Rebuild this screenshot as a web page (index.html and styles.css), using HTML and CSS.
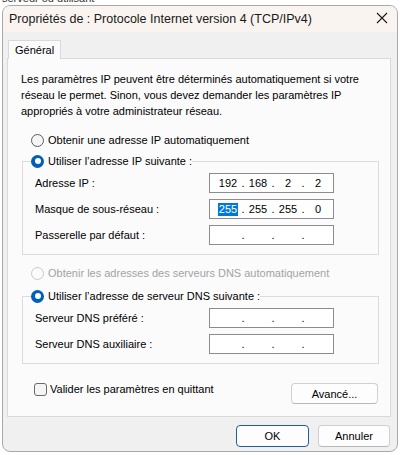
FILE: index.html
```html
<!DOCTYPE html>
<html lang="fr">
<head>
  <meta charset="UTF-8">
  <title>Propriétés de : Protocole Internet version 4 (TCP/IPv4)</title>
  <link rel="stylesheet" href="styles.css">
</head>
<body>

  <div class="behind"><span>serveur ou utilisant</span></div>

  <div class="window">
    <div class="titlebar">
      <span class="title">Propriétés de : Protocole Internet version 4 (TCP/IPv4)</span>
      <svg class="close" width="12" height="12" viewBox="0 0 12 12">
        <path d="M1 1 L11 11 M11 1 L1 11" stroke="#1a1a1a" stroke-width="1.1" fill="none"/>
      </svg>
    </div>

    <div class="content">
      <div class="tabs">
        <div class="tab">Général</div>
      </div>

      <div class="panel">
        <p class="intro">Les paramètres IP peuvent être déterminés automatiquement si votre<br>réseau le permet. Sinon, vous devez demander les paramètres IP<br>appropriés à votre administrateur réseau.</p>

        <div class="option first">
          <span class="radio"></span>Obtenir une adresse IP automatiquement
        </div>

        <fieldset class="group">
          <legend class="option"><span class="radio on"></span>Utiliser l’adresse IP suivante :</legend>
          <div class="field">
            <span>Adresse IP :</span>
            <div class="ip">
              <span class="seg">192</span><span class="dot">.</span><span class="seg">168</span><span class="dot">.</span><span class="seg">2</span><span class="dot">.</span><span class="seg">2</span>
            </div>
          </div>
          <div class="field">
            <span>Masque de sous-réseau :</span>
            <div class="ip">
              <span class="seg"><span class="sel">255</span></span><span class="dot">.</span><span class="seg">255</span><span class="dot">.</span><span class="seg">255</span><span class="dot">.</span><span class="seg">0</span>
            </div>
          </div>
          <div class="field">
            <span>Passerelle par défaut :</span>
            <div class="ip">
              <span class="seg"></span><span class="dot">.</span><span class="seg"></span><span class="dot">.</span><span class="seg"></span><span class="dot">.</span><span class="seg"></span>
            </div>
          </div>
        </fieldset>

        <div class="option disabled">
          <span class="radio"></span>Obtenir les adresses des serveurs DNS automatiquement
        </div>

        <fieldset class="group">
          <legend class="option"><span class="radio on"></span>Utiliser l’adresse de serveur DNS suivante :</legend>
          <div class="field">
            <span>Serveur DNS préféré :</span>
            <div class="ip">
              <span class="seg"></span><span class="dot">.</span><span class="seg"></span><span class="dot">.</span><span class="seg"></span><span class="dot">.</span><span class="seg"></span>
            </div>
          </div>
          <div class="field">
            <span>Serveur DNS auxiliaire :</span>
            <div class="ip">
              <span class="seg"></span><span class="dot">.</span><span class="seg"></span><span class="dot">.</span><span class="seg"></span><span class="dot">.</span><span class="seg"></span>
            </div>
          </div>
        </fieldset>

        <div class="bottom-row">
          <label class="check"><span class="box"></span>Valider les paramètres en quittant</label>
          <button class="btn advanced">Avancé...</button>
        </div>
      </div>

      <div class="footer">
        <button class="btn ok">OK</button>
        <button class="btn">Annuler</button>
      </div>
    </div>
  </div>

</body>
</html>
```

FILE: styles.css
```css
body {
  margin: 0;
  background: #ffffff;
  font-family: "Liberation Sans", Arial, sans-serif;
  font-size: 11px;
  color: #000;
}

.behind {
  height: 5px;
  overflow: hidden;
  padding-left: 2px;
  color: #333;
}

.behind span {
  display: block;
  margin-top: -8px;
  line-height: 13px;
}

/* Dialog window */
.window {
  margin: 0 2px 0 2px;
  height: 447px;
  box-sizing: border-box;
  border: 1px solid #a9a9a9;
  border-radius: 8px;
  background: #f0f0f0;
  overflow: hidden;
}

.titlebar {
  height: 26px;
  background: #f9f4f0;
  display: flex;
  align-items: center;
  justify-content: space-between;
  padding: 0 9px 0 6px;
}

.title {
  color: #1a1a1a;
  font-size: 12.5px;
}

.close {
  margin-top: -2px;
}

.content {
  padding: 7px 6px 0 4px;
}

.tabs {
  display: flex;
  height: 19px;
  padding-left: 1px;
}

.tab {
  border: 1px solid #d9d9d9;
  border-bottom: none;
  background: #fbfbfb;
  padding: 0 6px;
  line-height: 18px;
  position: relative;
  top: 1px;
}

.panel {
  border: 1px solid #d9d9d9;
  background: #fbfbfb;
  height: 359px;
  box-sizing: border-box;
  padding: 12px 11px 0 14px;
}

.intro {
  margin: 0 0 0 -1px;
  line-height: 16px;
}

.option {
  display: flex;
  align-items: center;
  height: 16px;
  line-height: 16px;
}

.option.first {
  margin: 13px 0 5px 9px;
}

.option.disabled {
  color: #a3a3a3;
  margin: 10px 0 7px 9px;
}

.radio {
  width: 13px;
  height: 13px;
  box-sizing: border-box;
  border: 1px solid #5c5c5c;
  border-radius: 50%;
  background: #f5f5f5;
  margin-right: 4px;
  display: inline-block;
  position: relative;
}

.disabled .radio {
  border-color: #c8c8c8;
  background: #fbfbfb;
}

.radio.on {
  border: none;
  background: #005fb8;
}

.radio.on::after {
  content: "";
  position: absolute;
  left: 3.5px;
  top: 3.5px;
  width: 6px;
  height: 6px;
  border-radius: 50%;
  background: #fff;
}

.group {
  margin: 0;
  border: 1px solid #dcdcdc;
  padding: 4px 0 9px 12px;
}

.group legend {
  padding: 0;
  margin-left: -4px;
}

.field {
  display: flex;
  align-items: center;
  height: 20px;
  margin-bottom: 6px;
}

.field:last-child {
  margin-bottom: 0;
}

.field > span {
  width: 174px;
}

.ip {
  width: 125px;
  height: 20px;
  box-sizing: border-box;
  border: 1px solid #8c8c8c;
  background: #fff;
  display: flex;
  align-items: center;
  padding-left: 6px;
}

.seg {
  width: 24px;
  text-align: center;
}

.dot {
  width: 6px;
  text-align: center;
}

.sel {
  background: #0078d7;
  color: #fff;
  line-height: 13px;
  padding: 0 1px;
  display: inline-block;
}

.bottom-row {
  display: flex;
  justify-content: space-between;
  align-items: flex-start;
  margin: 19px 0 0 12px;
}

.check {
  display: flex;
  align-items: center;
  line-height: 13px;
}

.box {
  width: 13px;
  height: 13px;
  box-sizing: border-box;
  border: 1px solid #6a6a6a;
  border-radius: 3px;
  background: #f5f5f5;
  margin-right: 3px;
}

.btn {
  font-family: inherit;
  font-size: 11px;
  color: #000;
  background: #fdfdfd;
  border: 1px solid #d0d0d0;
  border-bottom-color: #b8b8b8;
  border-radius: 4px;
  height: 21px;
  padding: 0;
}

.advanced {
  width: 87px;
  margin-right: 1px;
}

.footer {
  display: flex;
  justify-content: flex-end;
  gap: 9px;
  padding: 8px 1px 0 0;
}

.footer .btn {
  width: 72px;
  height: 22px;
}

.footer .ok {
  width: 73px;
  border: 1px solid #1f5fa0;
}
```
